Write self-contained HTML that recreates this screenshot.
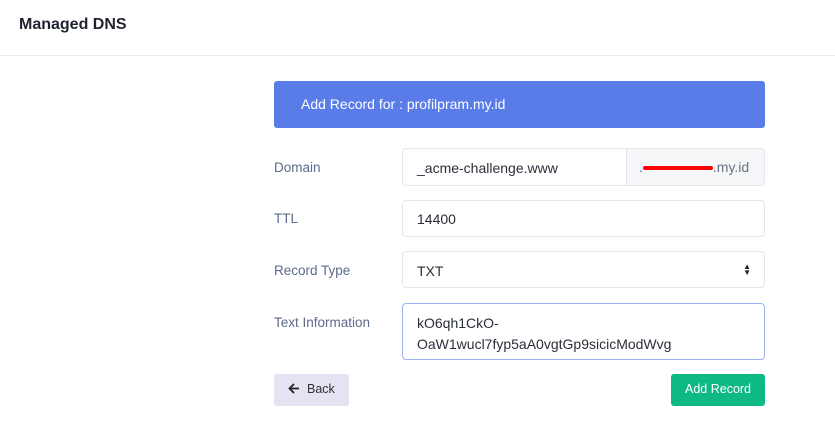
<!DOCTYPE html>
<html><head><style>
*{box-sizing:border-box;margin:0;padding:0}
body{width:835px;height:425px;background:#fff;font-family:"Liberation Sans",sans-serif;position:relative;overflow:hidden}
.hdr{position:absolute;left:0;top:0;width:835px;height:56px;border-bottom:1px solid #e9ebef}
.hdr h1{position:absolute;left:19px;top:16px;font-size:16px;font-weight:bold;color:#1f2330}
.banner{position:absolute;left:274px;top:81px;width:491px;height:47px;background:#5a7ce9;border-radius:3px;color:#fff;font-size:14px;padding:15px 0 0 27px}
.lbl{position:absolute;left:274px;font-size:13.5px;color:#5d6a8a}
.inp{position:absolute;left:402px;width:363px;border:1px solid #e3e6ec;border-radius:4px;font-size:14px;color:#2b2f3a;padding-left:14px}
.addon{position:absolute;right:0;top:0;bottom:0;width:138px;background:#f5f6f8;border-left:1px solid #e3e6ec;color:#6b7280;padding:10px 0 0 12px;border-radius:0 4px 4px 0}
.btn{position:absolute;top:374px;height:32px;border-radius:3px;font-size:12.5px;white-space:nowrap}
</style></head><body>
<div class="hdr"><h1>Managed DNS</h1></div>
<div class="banner">Add Record for : profilpram.my.id</div>
<div class="lbl" style="top:160px">Domain</div>
<div class="inp" style="top:148px;height:38px;padding-top:11px">_acme-challenge.www<div class="addon">.<span style="display:inline-block;width:70px;height:4px;background:#f00;vertical-align:middle;border-radius:2px"></span>.my.id</div></div>
<div class="lbl" style="top:211px">TTL</div>
<div class="inp" style="top:200px;height:37px;padding-top:10px">14400</div>
<div class="lbl" style="top:263px">Record Type</div>
<div class="inp" style="top:251px;height:37px;padding-top:11px">TXT<span style="position:absolute;right:13px;top:12px;font-size:8px;line-height:6px;color:#222">▲<br>▼</span></div>
<div class="lbl" style="top:315px">Text Information</div>
<div class="inp" style="top:303px;height:57px;padding-top:9px;line-height:21px;border-color:#9fb1f3">kO6qh1CkO-<br>OaW1wucl7fyp5aA0vgtGp9sicicModWvg</div>
<div class="btn" style="left:274px;width:75px;background:#e3e3f1;color:#333;padding:8px 0 0 14px"><svg width="12" height="11" viewBox="0 0 12 11" style="vertical-align:-1px;margin-right:7px"><path d="M11 5.5H2M6 1L1.5 5.5L6 10" fill="none" stroke="#222" stroke-width="1.8"/></svg>Back</div>
<div class="btn" style="left:671px;width:94px;background:#0fb985;color:#fff;padding:8px 0 0 14px">Add Record</div>
</body></html>
